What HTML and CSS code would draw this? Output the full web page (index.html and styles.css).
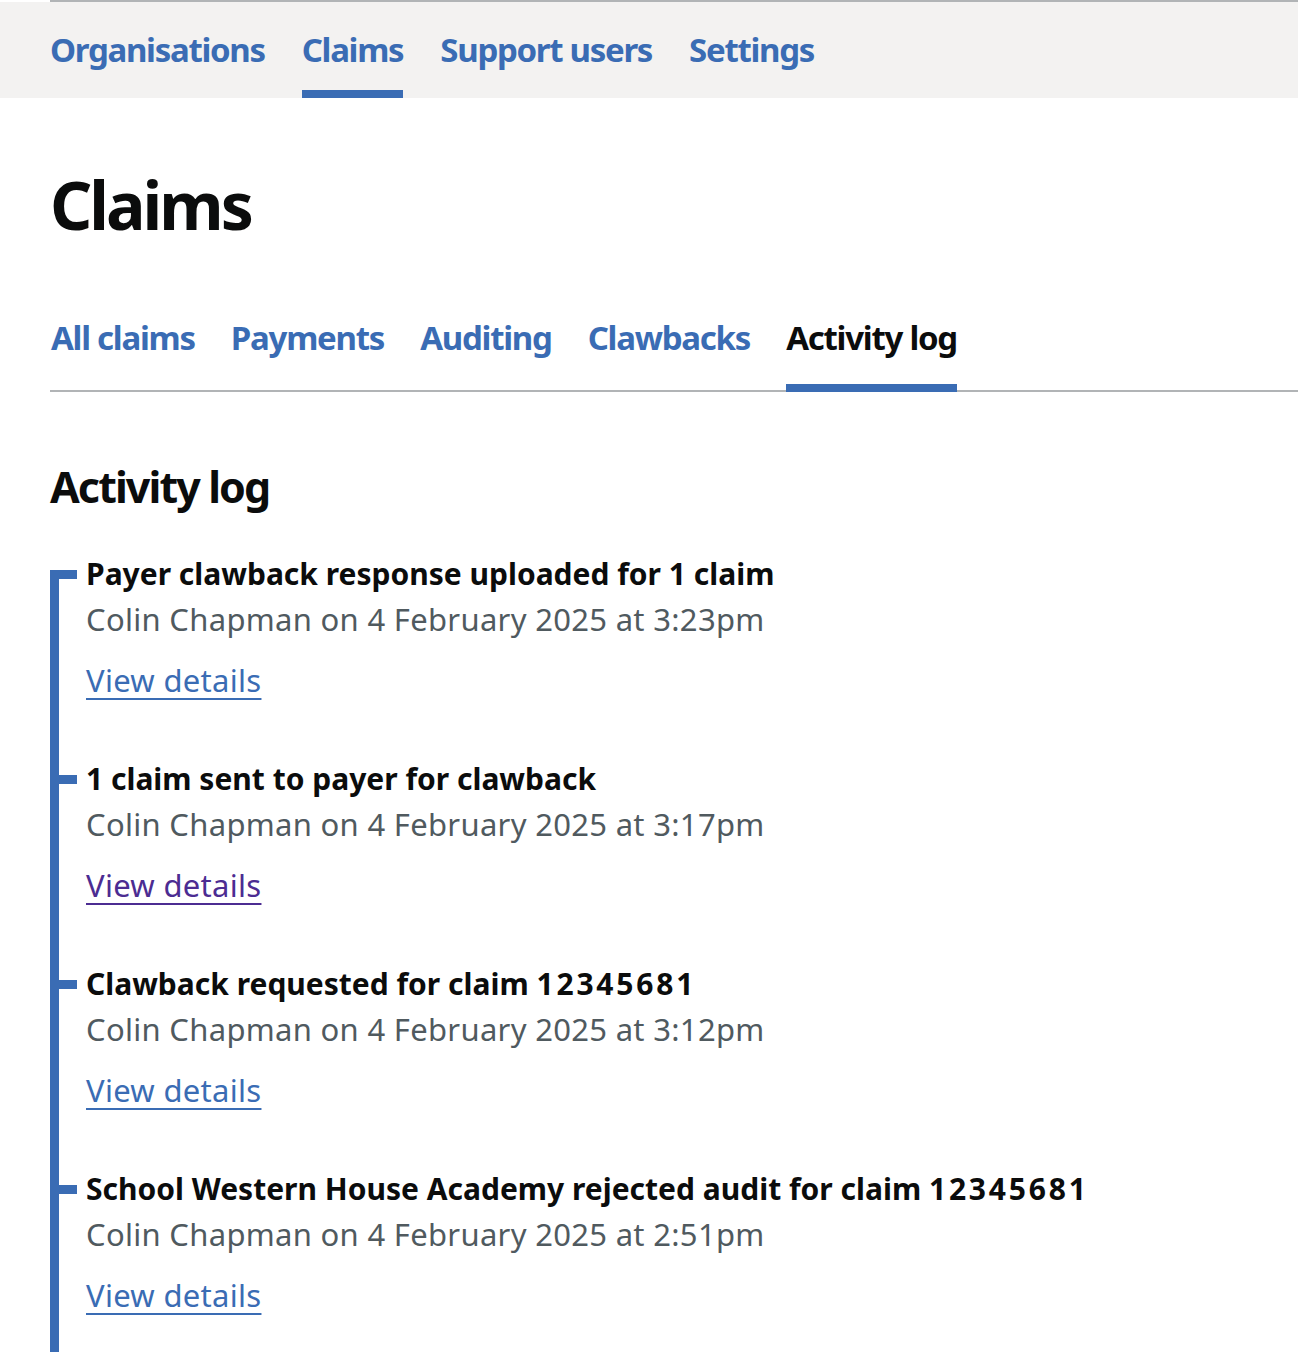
FILE: index.html
```html
<!DOCTYPE html>
<html lang="en">
<head>
<meta charset="utf-8">
<title>Claims - Activity log</title>
<link rel="stylesheet" href="styles.css">
</head>
<body>
<div class="topline"></div>
<nav class="primary-nav">
  <ul class="primary-nav__list">
    <li class="primary-nav__item"><a class="primary-nav__link" href="#">Organisations</a></li>
    <li class="primary-nav__item primary-nav__item--active"><a class="primary-nav__link" href="#">Claims</a></li>
    <li class="primary-nav__item"><a class="primary-nav__link" href="#">Support users</a></li>
    <li class="primary-nav__item"><a class="primary-nav__link" href="#">Settings</a></li>
  </ul>
</nav>
<main class="main">
  <h1 class="heading-xl">Claims</h1>
  <ul class="sub-nav">
    <li class="sub-nav__item"><a class="sub-nav__link" href="#">All claims</a></li>
    <li class="sub-nav__item"><a class="sub-nav__link" href="#">Payments</a></li>
    <li class="sub-nav__item"><a class="sub-nav__link" href="#">Auditing</a></li>
    <li class="sub-nav__item"><a class="sub-nav__link" href="#">Clawbacks</a></li>
    <li class="sub-nav__item sub-nav__item--active"><a class="sub-nav__link" href="#">Activity log</a></li>
  </ul>
  <h2 class="heading-l">Activity log</h2>
  <div class="timeline">
    <div class="timeline__item">
      <h3 class="timeline__title">Payer clawback response uploaded for 1 claim</h3>
      <p class="timeline__by">Colin Chapman on 4 February 2025 at 3:23pm</p>
      <p class="timeline__action"><a class="link" href="#">View details</a></p>
    </div>
    <div class="timeline__item">
      <h3 class="timeline__title">1 claim sent to payer for clawback</h3>
      <p class="timeline__by">Colin Chapman on 4 February 2025 at 3:17pm</p>
      <p class="timeline__action"><a class="link link--visited" href="#">View details</a></p>
    </div>
    <div class="timeline__item">
      <h3 class="timeline__title">Clawback requested for claim <span class="claim-ref">12345681</span></h3>
      <p class="timeline__by">Colin Chapman on 4 February 2025 at 3:12pm</p>
      <p class="timeline__action"><a class="link" href="#">View details</a></p>
    </div>
    <div class="timeline__item">
      <h3 class="timeline__title">School Western House Academy rejected audit for claim <span class="claim-ref">12345681</span></h3>
      <p class="timeline__by">Colin Chapman on 4 February 2025 at 2:51pm</p>
      <p class="timeline__action"><a class="link" href="#">View details</a></p>
    </div>
  </div>
</main>
</body>
</html>
```
FILE: styles.css
```css
* { box-sizing: border-box; }
html, body { margin: 0; padding: 0; background: #fff; }
body {
  font-family: "Noto Sans", "Liberation Sans", Arial, sans-serif;
  color: #0b0c0c;
  overflow: hidden;
}
.topline { height: 2px; margin-left: 50px; background: #b1b4b6; }
.primary-nav { background: #f3f2f1; }
.primary-nav__list {
  list-style: none; margin: 0; padding: 0 0 0 50px;
  display: flex; gap: 37px;
}
.primary-nav__item {
  padding-top: 31px; padding-bottom: 23px;
  border-bottom: 8px solid transparent;
  font-size: 33px; line-height: 34px; font-weight: 700; letter-spacing: -1.3px;
}
.primary-nav__item--active { border-bottom-color: #3a6cb4; }
.primary-nav__link { color: #3a6cb4; text-decoration: none; }

.main { padding: 0 0 0 50px; }
.heading-xl {
  margin: 0; padding: 66px 0 0 0;
  font-size: 66px; line-height: 80px; font-weight: 700; letter-spacing: -3px;
}
.sub-nav {
  list-style: none; margin: 77px 0 0 0; padding: 0 0 0 1px;
  display: flex; gap: 36px;
  border-bottom: 2px solid #b1b4b6;
}
.sub-nav__item {
  font-size: 33px; line-height: 34px; font-weight: 700; letter-spacing: -1.25px;
  padding-bottom: 29px;
  border-bottom: 8px solid transparent;
  margin-bottom: -2px;
}
.sub-nav__link { color: #3a6cb4; text-decoration: none; }
.sub-nav__item--active { border-bottom-color: #3a6cb4; }
.sub-nav__item--active .sub-nav__link { color: #0b0c0c; }

.heading-l {
  margin: 70px 0 0 0; padding-left: 0;
  font-size: 43px; line-height: 50px; font-weight: 700; letter-spacing: -1.9px;
}
.timeline {
  position: relative;
  margin-top: 42px;
  padding-left: 36px;
  padding-bottom: 40px;
}
.timeline::before {
  content: ""; position: absolute; left: 0; top: 16px; bottom: 0;
  width: 9px; background: #3a6cb4;
}
.timeline__item { position: relative; padding-bottom: 59px; }
.timeline__item::before {
  content: ""; position: absolute; left: -36px; top: 16px;
  width: 27px; height: 9px; background: #3a6cb4;
}
.timeline__title { margin: 0; font-size: 30px; line-height: 40px; font-weight: 700; }
.claim-ref { letter-spacing: 2.8px; }
.timeline__by {
  margin: 5px 0 0 0; font-size: 31px; line-height: 40px; color: #505a5f; letter-spacing: 0.3px;
}
.timeline__action { margin: 21px 0 0 0; font-size: 31px; line-height: 40px; letter-spacing: 0.3px; }
.link {
  color: #3a6cb4;
  text-decoration: underline; text-underline-offset: 6px; text-decoration-thickness: 2px;
}
.link--visited { color: #4c2c92; }
```
